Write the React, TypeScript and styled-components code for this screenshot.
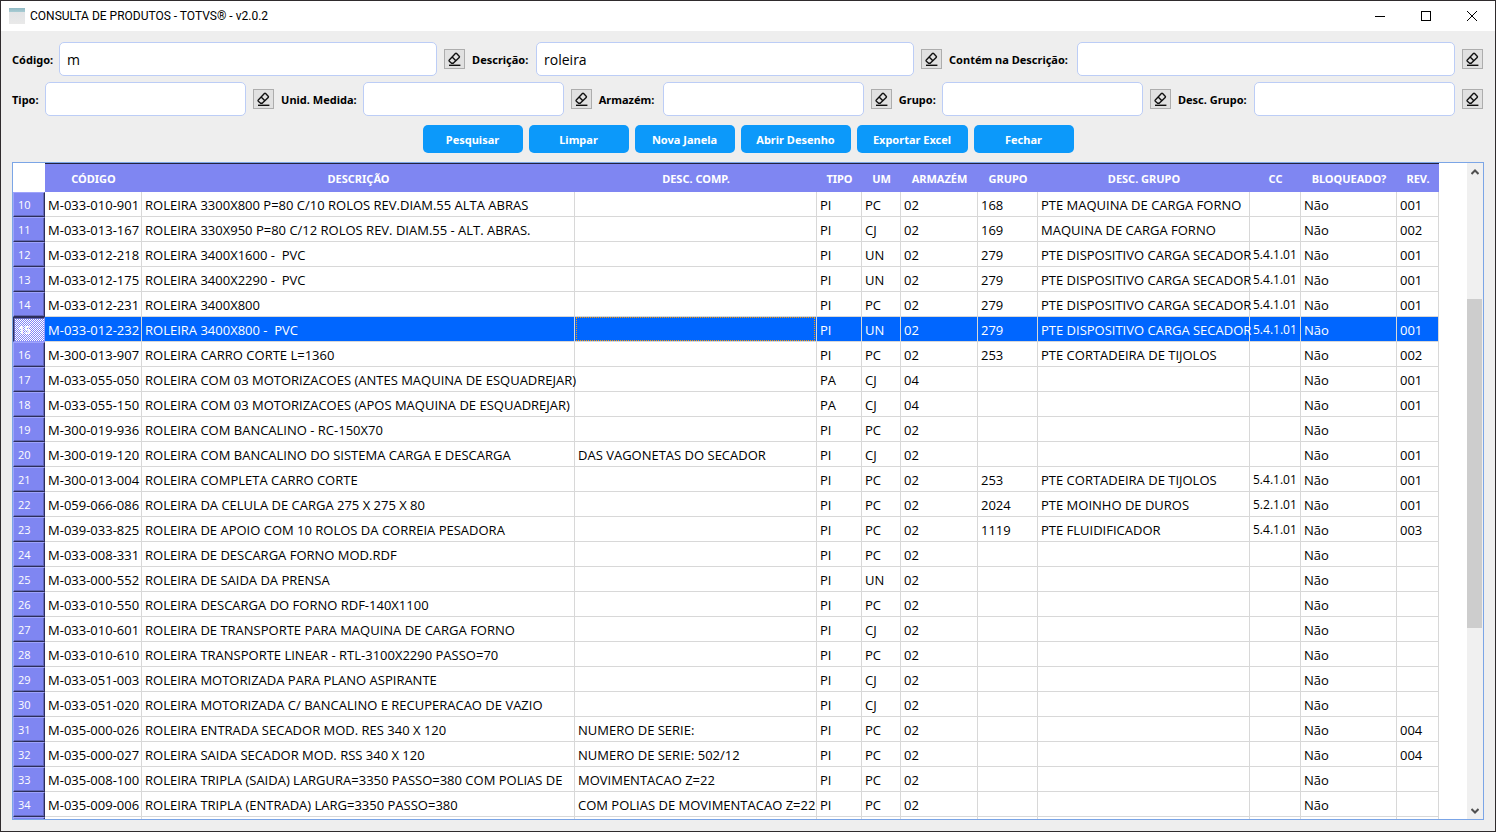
import React from "react";
import styled, { createGlobalStyle, css } from "styled-components";

const GlobalStyle = createGlobalStyle`
  *, *::before, *::after { box-sizing: border-box; }
  body { margin: 0; background: #2b2b2b; font-family: "Open Sans", "Noto Sans", sans-serif; }
  button, input { font: inherit; }
`;

const boldFont = `"Noto Sans", "Open Sans", sans-serif`;

const Window = styled.div`
  height: 100vh;
  display: flex;
  flex-direction: column;
  border: 1px solid #2f2b2d;
  background: #eeeeee;
  color: #000;
  overflow: hidden;
`;

const TitleBar = styled.header`
  flex: none;
  display: flex;
  align-items: center;
  height: 30px;
  padding-left: 8px;
  background: #fff;
`;

const AppIcon = styled.span`
  width: 16px;
  height: 16px;
  margin-right: 5px;
  background: linear-gradient(#8fb9c4, #a9ccd3 4px, #e2e4e6 4px, #e9e9e9);
`;

const Title = styled.h1`
  flex: 1;
  margin: 0;
  font-family: Roboto, "Open Sans", sans-serif;
  font-size: 12px;
  line-height: 16px;
  font-weight: 400;
`;

const WindowButton = styled.button`
  display: grid;
  place-items: center;
  width: 46px;
  height: 30px;
  padding: 0;
  border: 0;
  background: transparent;
`;

const Body = styled.main`
  flex: 1;
  min-height: 0;
  display: flex;
  flex-direction: column;
  padding: 11px;
`;

const Filters = styled.form`
  display: flex;
  flex-direction: column;
  gap: 6px;
`;

const FilterRow = styled.div`
  display: flex;
  gap: 7px;
  padding-right: 1px;
`;

const Field = styled.div`
  flex: 1 1 auto;
  display: flex;
  align-items: center;
  gap: 7px;
`;

const FieldLabel = styled.label<{ $width: number }>`
  flex: none;
  min-width: ${(p) => p.$width}px;
  margin-right: -1px;
  padding-top: 2px;
  font: 700 11px/16px ${boldFont};
  white-space: nowrap;
`;

const TextBox = styled.input`
  flex: 1 1 0;
  min-width: 0;
  height: 34px;
  padding: 0 7px;
  border: 1px solid #bccdf6;
  border-radius: 5px;
  background: #fff;
  font-size: 14px;
  color: #000;
  outline: none;
`;

const EraseButton = styled.button`
  flex: none;
  display: grid;
  place-items: center;
  width: 21px;
  height: 20px;
  padding: 0;
  border: 1px solid #adadad;
  background: #e1e1e1;
`;

const Actions = styled.div`
  display: flex;
  justify-content: center;
  gap: 6px;
  margin: 3px 0 9px;
`;

const ActionButton = styled.button<{ $width: number }>`
  width: ${(p) => p.$width}px;
  height: 28px;
  padding: 2px 0 0;
  border: 0;
  border-radius: 5px;
  background: #0c99fa;
  color: #fff;
  font: 700 11px/16px ${boldFont};
  white-space: nowrap;
`;

const TablePanel = styled.section`
  flex: 1;
  min-height: 0;
  display: flex;
  border: 1px solid #7ba5e6;
  background: #fff;
`;

const Viewport = styled.div`
  flex: 1;
  min-width: 0;
  overflow: hidden;
`;

const Grid = styled.table`
  table-layout: fixed;
  width: 1426px;
  border-collapse: separate;
  border-spacing: 0;
`;

const ColumnHead = styled.th`
  height: 29px;
  padding: 1px 0 0;
  border-top: 1px solid #232340;
  background: #7f86f2;
  color: #fff;
  font: 700 11px/16px ${boldFont};
  white-space: nowrap;
`;

const Corner = styled.td`
  background: #fff;
`;

const RowHead = styled.th<{ $current?: boolean }>`
  height: 25px;
  padding: 1px 0 0 4px;
  border: 1px solid;
  border-color: #9ea3fb #2c2e5c #2c2e5c #9ea3fb;
  box-shadow: inset -1px -1px #6368b8;
  background: #7f86f2;
  color: #fff;
  font-size: 11px;
  line-height: 16px;
  font-weight: 400;
  text-align: left;
  ${(p) =>
    p.$current &&
    css`
      border-color: #2c2e5c #9297fa #9297fa #2c2e5c;
      box-shadow: inset 1px 1px #6368b8;
      background: linear-gradient(45deg, #8085f5 30%, #fff 30% 70%, #8085f5 70%) 0 0 / 2px 2px;
      font-weight: 700;
    `}
`;

const Row = styled.tr<{ $selected?: boolean }>`
  ${(p) => p.$selected && "background: #0066ff; color: #fff;"}
`;

const Cell = styled.td<{ $focused?: boolean; $small?: boolean }>`
  height: 25px;
  padding: ${(p) => (p.$focused ? "0 1px" : "1px 0 0 3px")};
  border: solid #d8d8d8;
  border-width: 0 1px 1px 0;
  font-size: ${(p) => (p.$small ? 12 : 13)}px;
  line-height: 16px;
  white-space: pre;
`;

const FocusFrame = styled.div`
  height: 24px;
  border: 1px dotted #ff9a00;
`;

const ScrollBar = styled.div`
  flex: none;
  display: flex;
  flex-direction: column;
  width: 16px;
  padding-right: 1px;
  background: #f0f0f0;
`;

const ScrollButton = styled.button`
  display: grid;
  place-items: center;
  height: 17px;
  padding: 0;
  border: 0;
  background: transparent;
`;

const Track = styled.div<{ $share: number }>`
  flex: ${(p) => p.$share} 1 0;
`;

const Thumb = styled(Track)`
  background: #cdcdcd;
`;

const Eraser = () => (
  <svg width="15" height="15" viewBox="0 0 15 15" fill="none" stroke="#111" strokeWidth="1.4" strokeLinejoin="round" aria-hidden="true">
    <path d="M2.3 7.9 8.4 1.6 Q9 1 9.6 1.6 L12.2 4.2 Q12.8 4.8 12.2 5.4 L6.2 11.3 H4.6 L2.3 9.2 Q1.7 8.5 2.3 7.9Z" />
    <path d="M5.1 5.1 8.9 8.8" />
    <path d="M2 13.3H13.4" />
  </svg>
);

type FieldData = { id: string; label: string; labelWidth: number; value?: string };

const mainFields: FieldData[] = [
  { id: "codigo", label: "Código:", labelWidth: 41, value: "m" },
  { id: "descricao", label: "Descrição:", labelWidth: 58, value: "roleira" },
  { id: "contem", label: "Contém na Descrição:", labelWidth: 122 },
];

const extraFields: FieldData[] = [
  { id: "tipo", label: "Tipo:", labelWidth: 27 },
  { id: "unidade", label: "Unid. Medida:", labelWidth: 75 },
  { id: "armazem", label: "Armazém:", labelWidth: 58 },
  { id: "grupo", label: "Grupo:", labelWidth: 37 },
  { id: "desc-grupo", label: "Desc. Grupo:", labelWidth: 70 },
];

const actions: [string, number][] = [
  ["Pesquisar", 100],
  ["Limpar", 100],
  ["Nova Janela", 100],
  ["Abrir Desenho", 110],
  ["Exportar Excel", 111],
  ["Fechar", 100],
];

const columns: [string, number][] = [
  ["CÓDIGO", 97],
  ["DESCRIÇÃO", 433],
  ["DESC. COMP.", 242],
  ["TIPO", 45],
  ["UM", 39],
  ["ARMAZÉM", 77],
  ["GRUPO", 60],
  ["DESC. GRUPO", 212],
  ["CC", 51],
  ["BLOQUEADO?", 96],
  ["REV.", 42],
];

const firstRow = 10;
const currentRow = 15;
const focusedColumn = 2;
const costCentreColumn = 8;

const rows: string[][] = [
  ["M-033-010-901", "ROLEIRA 3300X800 P=80 C/10 ROLOS REV.DIAM.55 ALTA ABRAS", "", "PI", "PC", "02", "168", "PTE MAQUINA DE CARGA FORNO", "", "Não", "001"],
  ["M-033-013-167", "ROLEIRA 330X950 P=80 C/12 ROLOS REV. DIAM.55 - ALT. ABRAS.", "", "PI", "CJ", "02", "169", "MAQUINA DE CARGA FORNO", "", "Não", "002"],
  ["M-033-012-218", "ROLEIRA 3400X1600 -  PVC", "", "PI", "UN", "02", "279", "PTE DISPOSITIVO CARGA SECADOR", "5.4.1.01", "Não", "001"],
  ["M-033-012-175", "ROLEIRA 3400X2290 -  PVC", "", "PI", "UN", "02", "279", "PTE DISPOSITIVO CARGA SECADOR", "5.4.1.01", "Não", "001"],
  ["M-033-012-231", "ROLEIRA 3400X800", "", "PI", "PC", "02", "279", "PTE DISPOSITIVO CARGA SECADOR", "5.4.1.01", "Não", "001"],
  ["M-033-012-232", "ROLEIRA 3400X800 -  PVC", "", "PI", "UN", "02", "279", "PTE DISPOSITIVO CARGA SECADOR", "5.4.1.01", "Não", "001"],
  ["M-300-013-907", "ROLEIRA CARRO CORTE L=1360", "", "PI", "PC", "02", "253", "PTE CORTADEIRA DE TIJOLOS", "", "Não", "002"],
  ["M-033-055-050", "ROLEIRA COM 03 MOTORIZACOES (ANTES MAQUINA DE ESQUADREJAR)", "", "PA", "CJ", "04", "", "", "", "Não", "001"],
  ["M-033-055-150", "ROLEIRA COM 03 MOTORIZACOES (APOS MAQUINA DE ESQUADREJAR)", "", "PA", "CJ", "04", "", "", "", "Não", "001"],
  ["M-300-019-936", "ROLEIRA COM BANCALINO - RC-150X70", "", "PI", "PC", "02", "", "", "", "Não", ""],
  ["M-300-019-120", "ROLEIRA COM BANCALINO DO SISTEMA CARGA E DESCARGA", "DAS VAGONETAS DO SECADOR", "PI", "CJ", "02", "", "", "", "Não", "001"],
  ["M-300-013-004", "ROLEIRA COMPLETA CARRO CORTE", "", "PI", "PC", "02", "253", "PTE CORTADEIRA DE TIJOLOS", "5.4.1.01", "Não", "001"],
  ["M-059-066-086", "ROLEIRA DA CELULA DE CARGA 275 X 275 X 80", "", "PI", "PC", "02", "2024", "PTE MOINHO DE DUROS", "5.2.1.01", "Não", "001"],
  ["M-039-033-825", "ROLEIRA DE APOIO COM 10 ROLOS DA CORREIA PESADORA", "", "PI", "PC", "02", "1119", "PTE FLUIDIFICADOR", "5.4.1.01", "Não", "003"],
  ["M-033-008-331", "ROLEIRA DE DESCARGA FORNO MOD.RDF", "", "PI", "PC", "02", "", "", "", "Não", ""],
  ["M-033-000-552", "ROLEIRA DE SAIDA DA PRENSA", "", "PI", "UN", "02", "", "", "", "Não", ""],
  ["M-033-010-550", "ROLEIRA DESCARGA DO FORNO RDF-140X1100", "", "PI", "PC", "02", "", "", "", "Não", ""],
  ["M-033-010-601", "ROLEIRA DE TRANSPORTE PARA MAQUINA DE CARGA FORNO", "", "PI", "CJ", "02", "", "", "", "Não", ""],
  ["M-033-010-610", "ROLEIRA TRANSPORTE LINEAR - RTL-3100X2290 PASSO=70", "", "PI", "PC", "02", "", "", "", "Não", ""],
  ["M-033-051-003", "ROLEIRA MOTORIZADA PARA PLANO ASPIRANTE", "", "PI", "CJ", "02", "", "", "", "Não", ""],
  ["M-033-051-020", "ROLEIRA MOTORIZADA C/ BANCALINO E RECUPERACAO DE VAZIO", "", "PI", "CJ", "02", "", "", "", "Não", ""],
  ["M-035-000-026", "ROLEIRA ENTRADA SECADOR MOD. RES 340 X 120", "NUMERO DE SERIE:", "PI", "PC", "02", "", "", "", "Não", "004"],
  ["M-035-000-027", "ROLEIRA SAIDA SECADOR MOD. RSS 340 X 120", "NUMERO DE SERIE: 502/12", "PI", "PC", "02", "", "", "", "Não", "004"],
  ["M-035-008-100", "ROLEIRA TRIPLA (SAIDA) LARGURA=3350 PASSO=380 COM POLIAS DE", "MOVIMENTACAO Z=22", "PI", "PC", "02", "", "", "", "Não", ""],
  ["M-035-009-006", "ROLEIRA TRIPLA (ENTRADA) LARG=3350 PASSO=380", "COM POLIAS DE MOVIMENTACAO Z=22", "PI", "PC", "02", "", "", "", "Não", ""],
  ["", "", "", "", "", "", "", "", "", "", ""],
];

const FilterField = ({ id, label, labelWidth, value }: FieldData) => (
  <Field>
    <FieldLabel htmlFor={id} $width={labelWidth}>{label}</FieldLabel>
    <TextBox id={id} type="text" defaultValue={value} />
    <EraseButton type="button" aria-label={`Limpar ${label}`}>
      <Eraser />
    </EraseButton>
  </Field>
);

export default function App() {
  return (
    <>
      <GlobalStyle />
      <Window>
        <TitleBar>
          <AppIcon />
          <Title>CONSULTA DE PRODUTOS - TOTVS® - v2.0.2</Title>
          <WindowButton type="button" aria-label="Minimizar">
            <svg width="10" height="10" stroke="#000" shapeRendering="crispEdges"><path d="M0 5.5H10" /></svg>
          </WindowButton>
          <WindowButton type="button" aria-label="Maximizar">
            <svg width="10" height="10" stroke="#000" fill="none" shapeRendering="crispEdges"><path d="M.5.5h9v9h-9z" /></svg>
          </WindowButton>
          <WindowButton type="button" aria-label="Fechar janela">
            <svg width="10" height="10" stroke="#000"><path d="M0 0 10 10M10 0 0 10" /></svg>
          </WindowButton>
        </TitleBar>
        <Body>
          <Filters>
            <FilterRow>
              {mainFields.map((f) => <FilterField key={f.id} {...f} />)}
            </FilterRow>
            <FilterRow>
              {extraFields.map((f) => <FilterField key={f.id} {...f} />)}
            </FilterRow>
            <Actions>
              {actions.map(([text, width]) => (
                <ActionButton key={text} type="button" $width={width}>{text}</ActionButton>
              ))}
            </Actions>
          </Filters>
          <TablePanel>
            <Viewport>
              <Grid>
                <colgroup>
                  <col style={{ width: 32 }} />
                  {columns.map(([name, width]) => <col key={name} style={{ width }} />)}
                </colgroup>
                <thead>
                  <tr>
                    <Corner />
                    {columns.map(([name]) => <ColumnHead key={name} scope="col">{name}</ColumnHead>)}
                  </tr>
                </thead>
                <tbody>
                  {rows.map((cells, i) => {
                    const number = firstRow + i;
                    const selected = number === currentRow;
                    return (
                      <Row key={number} $selected={selected}>
                        <RowHead scope="row" $current={selected}>{cells[0] && number}</RowHead>
                        {cells.map((text, c) => {
                          const focused = selected && c === focusedColumn;
                          return (
                            <Cell key={c} $focused={focused} $small={c === costCentreColumn}>
                              {focused ? <FocusFrame>{text}</FocusFrame> : text}
                            </Cell>
                          );
                        })}
                      </Row>
                    );
                  })}
                </tbody>
              </Grid>
            </Viewport>
            <ScrollBar>
              <ScrollButton type="button" aria-label="Rolar para cima">
                <svg width="8" height="6" fill="none" stroke="#505050" strokeWidth="2"><path d="M.5 5 4 1.5 7.5 5" /></svg>
              </ScrollButton>
              <Track $share={119} />
              <Thumb $share={330} />
              <Track $share={174} />
              <ScrollButton type="button" aria-label="Rolar para baixo">
                <svg width="8" height="6" fill="none" stroke="#505050" strokeWidth="2"><path d="M.5 1 4 4.5 7.5 1" /></svg>
              </ScrollButton>
            </ScrollBar>
          </TablePanel>
        </Body>
      </Window>
    </>
  );
}
